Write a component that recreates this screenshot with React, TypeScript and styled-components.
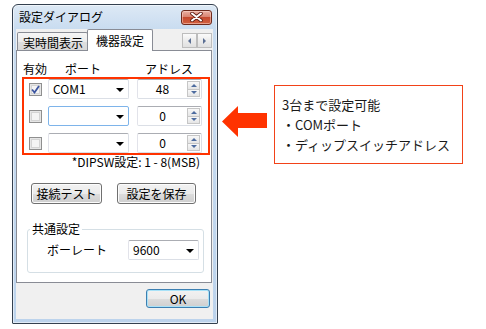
import React from 'react';
import styled, { createGlobalStyle } from 'styled-components';

const GlobalStyle = createGlobalStyle`
  html, body {
    margin: 0;
    padding: 0;
    background: #fff;
  }
  body {
    font-family: "Noto Sans CJK JP", "Noto Sans", sans-serif;
    font-size: 12px;
    color: #000;
  }
  * {
    box-sizing: border-box;
  }
`;

const Stage = styled.div`
  display: flex;
  align-items: flex-start;
  padding: 4px 0 0 12px;
`;

const Window = styled.div`
  width: 206px;
  height: 320px;
  display: flex;
  flex-direction: column;
  border: 1px solid #34404f;
  border-radius: 6px 6px 1px 1px;
  background: linear-gradient(180deg, #dde9f5 0px, #c9dcf0 24px, #bcd3ec 100%);
  padding: 0 4px 4px 3px;
  box-shadow: inset 0 0 0 1px rgba(255, 255, 255, 0.55);
`;

const TitleBar = styled.div`
  height: 24px;
  flex: none;
  display: flex;
  align-items: center;
  justify-content: space-between;
`;

const Title = styled.span`
  padding-left: 3px;
  font-size: 12px;
  line-height: 14px;
`;

const CloseButton = styled.div`
  width: 31px;
  height: 15px;
  margin-right: 1px;
  display: flex;
  align-items: center;
  justify-content: center;
  border: 1px solid #6e2a1c;
  border-radius: 3px;
  background: linear-gradient(180deg, #eab0a3 0%, #d98470 45%, #c54a2f 50%, #d2603f 100%);
  box-shadow: inset 0 0 0 1px rgba(255, 220, 210, 0.5);
`;

const Client = styled.div`
  flex: 1;
  display: flex;
  flex-direction: column;
  background: #f0f0f0;
`;

const TabStrip = styled.div`
  height: 21px;
  flex: none;
  display: flex;
  align-items: flex-end;
  padding: 0 1px;
`;

const Tab = styled.div<{ $active?: boolean }>`
  position: relative;
  display: flex;
  align-items: flex-start;
  height: ${p => (p.$active ? '22px' : '18px')};
  margin-bottom: ${p => (p.$active ? '-1px' : '0')};
  margin-left: ${p => (p.$active ? '-1px' : '0')};
  padding: ${p => (p.$active ? '4px 8px 0 8px' : '3px 4px 0 5px')};
  border: 1px solid #898c95;
  border-bottom: none;
  border-radius: 2px 2px 0 0;
  background: ${p =>
    p.$active ? '#fff' : 'linear-gradient(180deg, #f6f6f6 0%, #ececec 50%, #dfdfdf 51%, #d8d8d8 100%)'};
  z-index: ${p => (p.$active ? 1 : 0)};
  font-size: 12px;
  line-height: 13px;
`;

const TabScroll = styled.div`
  margin-left: auto;
  margin-bottom: 2px;
  display: flex;
`;

const ScrollButton = styled.div<{ $dir: 'left' | 'right' }>`
  width: 15px;
  height: 15px;
  display: flex;
  align-items: center;
  justify-content: center;
  border: 1px solid #bdbdbd;
  background: linear-gradient(180deg, #fbfbfb 0%, #ececec 50%, #e0e0e0 100%);

  &::after {
    content: '';
    width: 0;
    height: 0;
    border-top: 3px solid transparent;
    border-bottom: 3px solid transparent;
    ${p => (p.$dir === 'left' ? 'border-right: 3px solid #5b6f93;' : 'border-left: 3px solid #5b6f93;')}
  }
`;

const Panel = styled.div`
  height: 233px;
  flex: none;
  margin-right: 1px;
  display: flex;
  flex-direction: column;
  align-items: flex-start;
  background: #fff;
  border: 1px solid #898c95;
  padding-left: 5px;
`;

const HeaderRow = styled.div`
  display: grid;
  grid-template-columns: 42px 80px auto;
  margin-top: 11px;
  padding-left: 1px;
  height: 14px;
  line-height: 14px;
`;

const RedBox = styled.div`
  margin-top: 1px;
  width: 188px;
  height: 78px;
  border: 2px solid #ff3300;
  display: flex;
  flex-direction: column;
  gap: 7px;
`;

const Row = styled.div`
  height: 20px;
  display: flex;
  align-items: center;
  padding-left: 5px;
`;

const CheckBox = styled.span`
  width: 13px;
  height: 13px;
  margin-right: 6px;
  flex: none;
  display: flex;
  align-items: center;
  justify-content: center;
  border: 1px solid #8f8f8f;
  background: #f4f4f4;
  box-shadow: inset 0 0 0 1px #e6e6e6, inset 0 0 0 2px #d4d4d4;
`;

const TextBorder = `
  border: 1px solid #dbdfe6;
  border-top-color: #abadb3;
  border-left-color: #e2e3ea;
  border-radius: 2px;
  background: #fff;
`;

const Combo = styled.div<{ $w: number; $focused?: boolean }>`
  width: ${p => p.$w}px;
  height: 20px;
  flex: none;
  display: flex;
  align-items: center;
  justify-content: space-between;
  padding: 0 4px 0 4px;
  ${TextBorder}
  ${p => (p.$focused ? 'border-color: #7eb4ea;' : '')}
  font-size: 12px;
  line-height: 14px;
`;

const DropArrow = styled.span`
  width: 0;
  height: 0;
  margin-top: 2px;
  border-left: 4px solid transparent;
  border-right: 4px solid transparent;
  border-top: 4px solid #000;
`;

const Spin = styled.div`
  margin-left: 8px;
  width: 65px;
  height: 20px;
  flex: none;
  display: flex;
  ${TextBorder}
`;

const SpinValue = styled.span`
  flex: 1;
  text-align: center;
  line-height: 18px;
  font-size: 12px;
`;

const Spinner = styled.div`
  width: 13px;
  margin: 1px 1px 1px 0;
  display: flex;
  flex-direction: column;
`;

const SpinHalf = styled.div<{ $dir: 'up' | 'down' }>`
  flex: 1;
  display: flex;
  align-items: center;
  justify-content: center;
  border: 1px solid #c6c6c6;
  ${p => (p.$dir === 'down' ? 'border-top: none;' : '')}
  background: linear-gradient(180deg, #f8f8f8 0%, #e5e5e5 100%);

  &::after {
    content: '';
    width: 0;
    height: 0;
    border-left: 3px solid transparent;
    border-right: 3px solid transparent;
    ${p => (p.$dir === 'up' ? 'border-bottom: 3px solid #4e6c9f;' : 'border-top: 3px solid #4e6c9f;')}
  }
`;

const DipNote = styled.div`
  align-self: stretch;
  text-align: right;
  padding-right: 11px;
  height: 14px;
  line-height: 14px;
`;

const ButtonRow = styled.div`
  display: flex;
  gap: 15px;
  margin-top: 14px;
  padding-left: 9px;
`;

const PushButton = styled.div<{ $w: number; $default?: boolean }>`
  width: ${p => p.$w}px;
  height: ${p => (p.$default ? 19 : 21)}px;
  display: flex;
  align-items: center;
  justify-content: center;
  border: 1px solid ${p => (p.$default ? '#3c7fb1' : '#707070')};
  border-radius: 3px;
  background: linear-gradient(180deg, #f2f2f2 0%, #ebebeb 50%, #dddddd 51%, #cfcfcf 100%);
  box-shadow: inset 0 0 0 1px ${p => (p.$default ? '#a8e2f8' : '#fcfcfc')};
  font-size: 12px;
  line-height: 14px;
`;

const GroupBox = styled.fieldset`
  margin: 18px 0 0 5px;
  width: 177px;
  height: 51px;
  padding: 0;
  border: 1px solid #d5dfe5;
  border-radius: 3px;
`;

const Legend = styled.legend`
  margin-left: 2px;
  padding: 0 2px;
  font-size: 12px;
  line-height: 14px;
`;

const BaudRow = styled.div`
  display: flex;
  align-items: center;
  margin-top: 4px;
  padding-left: 19px;
`;

const BaudLabel = styled.span`
  width: 81px;
  line-height: 14px;
`;

const Footer = styled.div`
  display: flex;
  justify-content: flex-end;
  padding: 6px 3px 0 0;
`;

const Side = styled.div`
  display: flex;
  align-items: flex-start;
  margin: 81px 0 0 4px;
`;

const Arrow = styled.svg`
  margin-top: 21px;
  flex: none;
`;

const Callout = styled.div`
  width: 189px;
  height: 79px;
  margin-left: 6px;
  border: 1px solid #f24218;
  padding: 9px 0 0 7px;
  font-size: 13px;
  line-height: 20px;
  color: #1a1a1a;
`;

const rows = [
  { checked: true, port: 'COM1', addr: '48', focused: false },
  { checked: false, port: '', addr: '0', focused: true },
  { checked: false, port: '', addr: '0', focused: false },
];

const Check = () => (
  <svg width="9" height="9" viewBox="0 0 9 9">
    <path d="M1 4.5 L3.5 7.5 L8 1" fill="none" stroke="#3b54a0" strokeWidth="1.8" />
  </svg>
);

const CloseGlyph = () => (
  <svg width="13" height="10" viewBox="0 0 13 10">
    <path d="M2 1.5 L11 8.5 M11 1.5 L2 8.5" stroke="#5e1d12" strokeWidth="3.6" strokeLinecap="round" />
    <path d="M2 1.5 L11 8.5 M11 1.5 L2 8.5" stroke="#fff" strokeWidth="2" strokeLinecap="round" />
  </svg>
);

const App: React.FC = () => {
  return (
    <>
      <GlobalStyle />
      <Stage>
        <Window>
          <TitleBar>
            <Title>設定ダイアログ</Title>
            <CloseButton>
              <CloseGlyph />
            </CloseButton>
          </TitleBar>
          <Client>
            <TabStrip>
              <Tab>実時間表示</Tab>
              <Tab $active>機器設定</Tab>
              <TabScroll>
                <ScrollButton $dir="left" />
                <ScrollButton $dir="right" />
              </TabScroll>
            </TabStrip>
            <Panel>
              <HeaderRow>
                <span>有効</span>
                <span>ポート</span>
                <span>アドレス</span>
              </HeaderRow>
              <RedBox>
                {rows.map((r, i) => (
                  <Row key={i}>
                    <CheckBox>{r.checked && <Check />}</CheckBox>
                    <Combo $w={81} $focused={r.focused}>
                      <span>{r.port}</span>
                      <DropArrow />
                    </Combo>
                    <Spin>
                      <SpinValue>{r.addr}</SpinValue>
                      <Spinner>
                        <SpinHalf $dir="up" />
                        <SpinHalf $dir="down" />
                      </Spinner>
                    </Spin>
                  </Row>
                ))}
              </RedBox>
              <DipNote>*DIPSW設定: 1 - 8(MSB)</DipNote>
              <ButtonRow>
                <PushButton $w={71}>接続テスト</PushButton>
                <PushButton $w={79}>設定を保存</PushButton>
              </ButtonRow>
              <GroupBox>
                <Legend>共通設定</Legend>
                <BaudRow>
                  <BaudLabel>ボーレート</BaudLabel>
                  <Combo $w={71}>
                    <span>9600</span>
                    <DropArrow />
                  </Combo>
                </BaudRow>
              </GroupBox>
            </Panel>
            <Footer>
              <PushButton $w={64} $default>OK</PushButton>
            </Footer>
          </Client>
        </Window>
        <Side>
          <Arrow width="46" height="31" viewBox="0 0 46 31">
            <polygon points="0,15.5 16,0 16,7 45,7 45,22 16,22 16,31" fill="#ff3300" />
          </Arrow>
          <Callout>
            <div>3台まで設定可能</div>
            <div>・COMポート</div>
            <div>・ディップスイッチアドレス</div>
          </Callout>
        </Side>
      </Stage>
    </>
  );
};

export default App;
